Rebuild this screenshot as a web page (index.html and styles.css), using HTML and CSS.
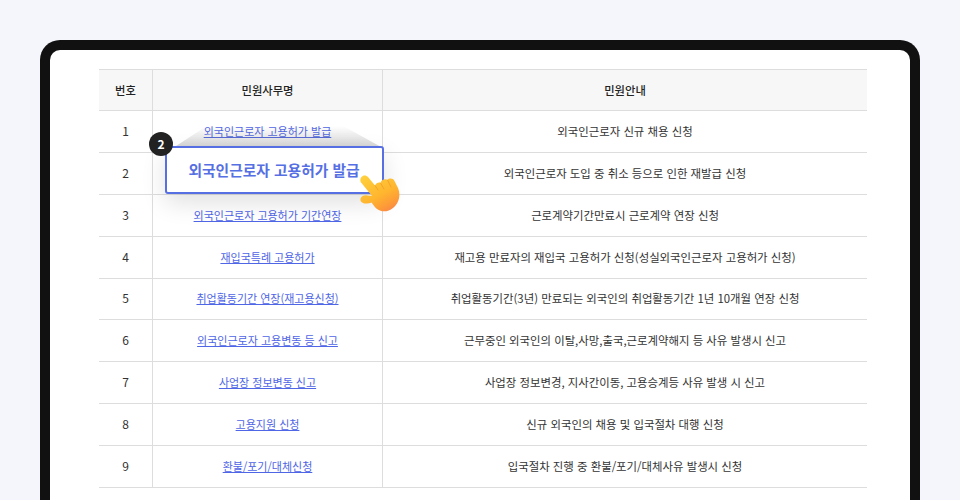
FILE: index.html
```html
<!DOCTYPE html>
<html lang="ko">
<head>
<meta charset="utf-8">
<title>민원사무</title>
<link rel="stylesheet" href="styles.css">
</head>
<body>
<main class="device">
  <div class="screen">
    <div class="table-wrap">
      <table class="civil">
        <colgroup><col class="c1"><col class="c2"><col class="c3"></colgroup>
        <thead>
          <tr><th>번호</th><th>민원사무명</th><th>민원안내</th></tr>
        </thead>
        <tbody>
          <tr><td class="num">1</td><td><a href="#">외국인근로자 고용허가 발급</a></td><td class="info">외국인근로자 신규 채용 신청</td></tr>
          <tr><td class="num">2</td><td></td><td class="info">외국인근로자 도입 중 취소 등으로 인한 재발급 신청</td></tr>
          <tr><td class="num">3</td><td><a href="#">외국인근로자 고용허가 기간연장</a></td><td class="info">근로계약기간만료시 근로계약 연장 신청</td></tr>
          <tr><td class="num">4</td><td><a href="#">재입국특례 고용허가</a></td><td class="info">재고용 만료자의 재입국 고용허가 신청(성실외국인근로자 고용허가 신청)</td></tr>
          <tr><td class="num">5</td><td><a href="#">취업활동기간 연장(재고용신청)</a></td><td class="info">취업활동기간(3년) 만료되는 외국인의 취업활동기간 1년 10개월 연장 신청</td></tr>
          <tr><td class="num">6</td><td><a href="#">외국인근로자 고용변동 등 신고</a></td><td class="info">근무중인 외국인의 이탈,사망,출국,근로계약해지 등 사유 발생시 신고</td></tr>
          <tr><td class="num">7</td><td><a href="#">사업장 정보변동 신고</a></td><td class="info">사업장 정보변경, 지사간이동, 고용승계등 사유 발생 시 신고</td></tr>
          <tr><td class="num">8</td><td><a href="#">고용지원 신청</a></td><td class="info">신규 외국인의 채용 및 입국절차 대행 신청</td></tr>
          <tr><td class="num">9</td><td><a href="#">환불/포기/대체신청</a></td><td class="info">입국절차 진행 중 환불/포기/대체사유 발생시 신청</td></tr>
        </tbody>
      </table>
      <div class="callout">
        <div class="flare"></div>
        <div class="focus-box">외국인근로자 고용허가 발급</div>
        <span class="badge">2</span>
        <svg class="hand" viewBox="0 0 40 37" width="40" height="37" aria-hidden="true">
          <defs>
            <linearGradient id="skin" x1="0.15" y1="0" x2="0.75" y2="1">
              <stop offset="0" stop-color="#ffcf3d"/>
              <stop offset="0.55" stop-color="#ffb62e"/>
              <stop offset="0.85" stop-color="#fd9a38"/>
              <stop offset="1" stop-color="#f98848"/>
            </linearGradient>
          </defs>
          <path fill="url(#skin)" d="M1 2.500C3-.5 6.500 0 8 2L15 10.500C16 8 19 7 20.500 8C21 5 25 3 27.500 5C29 3 33 3 34.500 6L38 13C41 20 39 28 33 33C28 37 22 37.500 17 34C14.500 32 13 29.500 11.500 27.500C9 28.500 5 29 3 28C0 27 0 24 1 22.500C2.500 20.500 5 20 7 20.500L12 21L1.500 8C0 6.500 0 4 1 2.500Z"/>
          <path fill="none" stroke="#f39a2a" stroke-width=".8" stroke-linecap="round" d="M15 10.500l3 4.500M20.500 8l3.500 6M27.500 5l3.500 7"/>
        </svg>
      </div>
    </div>
  </div>
</main>
</body>
</html>
```
FILE: styles.css
```css
* { box-sizing: border-box; }
html, body { height: 100%; }
body {
  margin: 0;
  height: 500px;
  overflow: hidden;
  background: #f4f6fb;
  font-family: "Noto Sans CJK KR", "Noto Sans", sans-serif;
  color: #222;
}
.device {
  margin: 40px 40px 0;
  height: 480px;
  border: 10px solid #111;
  border-bottom-width: 0;
  border-radius: 20px 20px 0 0;
  background: #fff;
}
.screen {
  padding: 19px 43px 0 49px;
}
.table-wrap {
  position: relative;
  width: 768px;
}
.civil {
  width: 768px;
  border-collapse: collapse;
  table-layout: fixed;
  font-size: 11px;
}
.c1 { width: 53.500px; }
.c2 { width: 230px; }
.c3 { width: 484.500px; }
.civil th, .civil td {
  border: 1px solid #ddd;
  text-align: center;
  vertical-align: middle;
  padding: 0 0 1px;
  line-height: 16px;
}
.civil th:first-child, .civil td:first-child { border-left: 0; }
.civil th:last-child, .civil td:last-child { border-right: 0; }
.civil th {
  height: 41px;
  background: #f7f7f7;
  font-size: 11.300px;
  font-weight: 500;
  color: #222;
}
.civil td { height: 41.890px; font-weight: 400; color: #333; }
.civil .num { font-size: 12px; }
.civil .info { font-size: 11.400px; }
.civil a { color: #4f66e6; text-decoration: underline; }

.callout {
  position: absolute;
  left: 66px;
  top: 77px;
  width: 219px;
  height: 48px;
}
.flare {
  position: absolute;
  left: 8px;
  right: 1px;
  top: -20px;
  height: 22px;
  clip-path: polygon(16% 0, 81% 0, 100% 100%, 0 100%);
  background: linear-gradient(to bottom, rgba(255,255,255,0), rgba(120,120,120,.32));
}
.focus-box {
  position: relative;
  height: 48px;
  border: 2px solid #566fe3;
  border-radius: 3px;
  background: #fff;
  box-shadow: 0 9px 24px rgba(0,0,0,.12);
  color: #566fe3;
  font-size: 14.750px;
  font-weight: 700;
  line-height: 44px;
  text-align: center;
  padding-right: 1px;
}
.badge {
  position: absolute;
  left: -16px;
  top: -14px;
  width: 24px;
  height: 24px;
  border-radius: 50%;
  background: #222;
  color: #fff;
  font-size: 12px;
  font-weight: 700;
  line-height: 24px;
  text-align: center;
}
.hand {
  position: absolute;
  left: 195px;
  top: 29px;
  filter: blur(.3px);
}
```
